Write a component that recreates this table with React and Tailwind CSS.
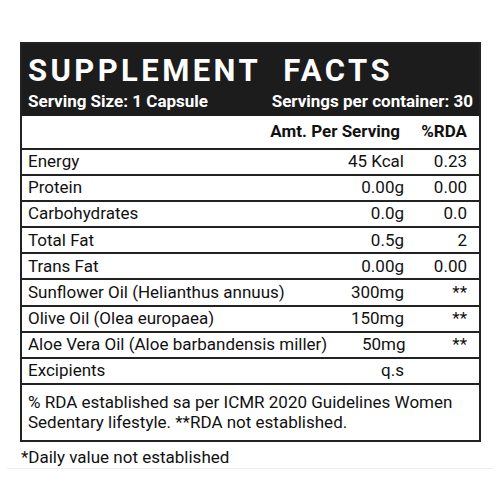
const rows = [
  ['Energy', '45 Kcal', '0.23'],
  ['Protein', '0.00g', '0.00'],
  ['Carbohydrates', '0.0g', '0.0'],
  ['Total Fat', '0.5g', '2'],
  ['Trans Fat', '0.00g', '0.00'],
  ['Sunflower Oil (Helianthus annuus)', '300mg', '**'],
  ['Olive Oil (Olea europaea)', '150mg', '**'],
  ['Aloe Vera Oil (Aloe barbandensis miller)', '50mg', '**'],
  ['Excipients', 'q.s', ''],
];

export default function App() {
  return (
    <div className="w-[500px] h-[500px] bg-white font-['Roboto',sans-serif] text-[#111]">
      <div className="pt-[42px] pl-[20px]">
        <div className="w-[461px] border-2 border-[#222]">
          <div className="bg-[#1c1c1c] text-white px-[6px] pt-[10px] pb-[4px]">
            <div className="text-[31px] leading-[34px] font-bold tracking-[0.11em]">SUPPLEMENT&nbsp; FACTS</div>
            <div className="flex justify-between text-[17px] leading-[22px] font-bold mt-[2px]">
              <span>Serving Size: 1 Capsule</span>
              <span>Servings per container: 30</span>
            </div>
          </div>
          <div className="flex h-[34px] items-center border-b-2 border-[#222] font-bold text-[17px] pl-[6px] pr-[12px]">
            <span className="flex-1" />
            <span className="w-[150px] text-right">Amt. Per Serving</span>
            <span className="w-[67px] text-right">%RDA</span>
          </div>
          {rows.map(([name, amt, rda]) => (
            <div key={name} className="flex h-[26.1px] items-center border-b-2 border-[#222] text-[17px] pl-[6px] pr-[12px]">
              <span className="flex-1 whitespace-nowrap">{name}</span>
              <span className="w-[80px] text-right">{amt}</span>
              <span className="w-[63px] text-right">{rda}</span>
            </div>
          ))}
          <div className="px-[6px] pt-[7px] pb-[8px] text-[17px] leading-[20px]">
            % RDA established sa per ICMR 2020 Guidelines Women Sedentary lifestyle. **RDA not established.
          </div>
        </div>
        <div className="text-[17px] leading-[20px] pt-[5px] pl-[1px]">*Daily value not established</div>
      </div>
      <div className="mx-[7px] mt-[1px] border-t border-[#eee]" />
    </div>
  );
}
